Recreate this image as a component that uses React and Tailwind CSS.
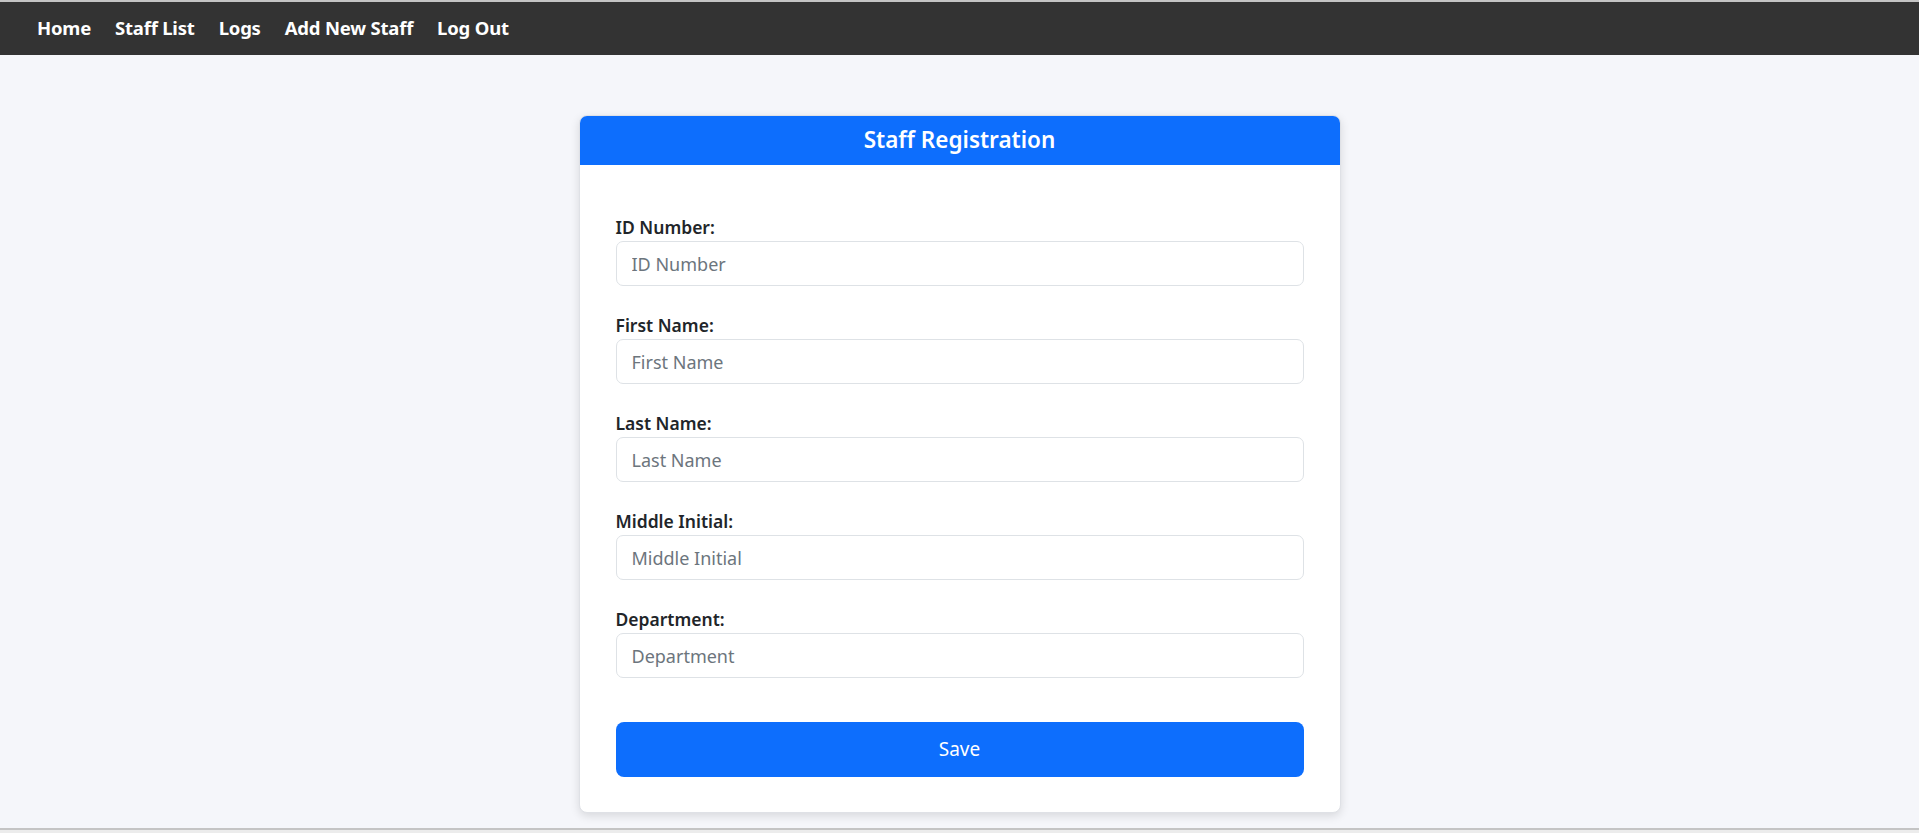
import React, { useState } from 'react';

const fields = [
  { key: 'idNumber', label: 'ID Number:', placeholder: 'ID Number' },
  { key: 'firstName', label: 'First Name:', placeholder: 'First Name' },
  { key: 'lastName', label: 'Last Name:', placeholder: 'Last Name' },
  { key: 'middleInitial', label: 'Middle Initial:', placeholder: 'Middle Initial' },
  { key: 'department', label: 'Department:', placeholder: 'Department' },
];

const navLinks = ['Home', 'Staff List', 'Logs', 'Add New Staff', 'Log Out'];

export default function App() {
  const [form, setForm] = useState({
    idNumber: '',
    firstName: '',
    lastName: '',
    middleInitial: '',
    department: '',
  });

  const handleChange = (key, value) => {
    setForm((prev) => ({ ...prev, [key]: value }));
  };

  const handleSubmit = (e) => {
    e.preventDefault();
  };

  return (
    <div className="h-[833px] flex flex-col bg-[#f5f6fa] font-['Noto_Sans',sans-serif] overflow-hidden">
      <div className="h-[2px] bg-[#c4c4c4]" />
      <nav className="h-[53px] bg-[#333333] flex items-center pl-[37px] gap-[24px]">
        {navLinks.map((link) => (
          <a
            key={link}
            href="#"
            className="text-white text-[18.5px] font-bold tracking-[-0.2px] leading-none"
          >
            {link}
          </a>
        ))}
      </nav>

      <main className="flex-1 flex justify-center pt-[60px]">
        <div className="w-[762px] h-[698px] bg-white rounded-[8px] border border-[#dfe1e6] shadow-[0_3px_10px_rgba(0,0,0,0.12)] overflow-hidden flex flex-col">
          <div className="h-[49px] bg-[#0d6efd] flex items-center justify-center">
            <h2 className="text-white text-[22.5px] font-semibold leading-none">
              Staff Registration
            </h2>
          </div>

          <form onSubmit={handleSubmit} className="px-[36px] pt-[49px] flex flex-col">
            {fields.map((field) => (
              <div key={field.key} className="flex flex-col mb-[26px]">
                <label className="text-[17.5px] font-semibold text-[#212529] leading-[27px]">
                  {field.label}
                </label>
                <input
                  type="text"
                  placeholder={field.placeholder}
                  value={form[field.key]}
                  onChange={(e) => handleChange(field.key, e.target.value)}
                  className="h-[45px] w-full px-[15px] rounded-[7px] border border-[#dee2e6] text-[18px] text-[#212529] placeholder:text-[#6c757d] outline-none"
                />
              </div>
            ))}

            <button
              type="submit"
              className="mt-[18px] h-[55px] w-full rounded-[8px] bg-[#0d6efd] text-white text-[19px]"
            >
              Save
            </button>
          </form>
        </div>
      </main>

      <div className="h-[2px] bg-[#c4c4c4]" />
      <div className="h-[3px] bg-[#ececec]" />
    </div>
  );
}
